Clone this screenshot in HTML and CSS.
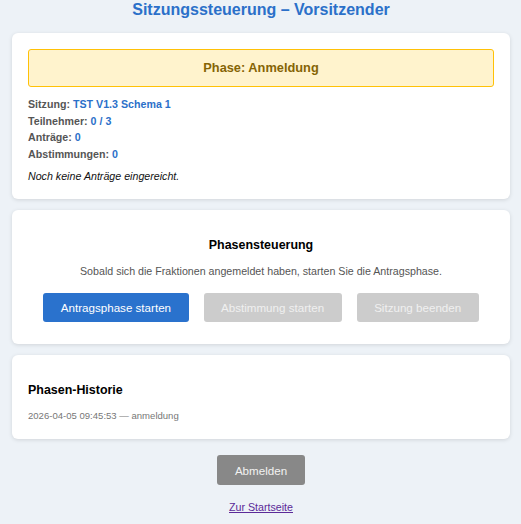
FILE: index.html
```html
<!DOCTYPE html>
<html lang="de">
<head>
<meta charset="utf-8">
<title>Sitzungssteuerung</title>
<link rel="stylesheet" href="styles.css">
</head>
<body>
<main class="page">
  <h1 class="title">Sitzungssteuerung – Vorsitzender</h1>

  <section class="card">
    <div class="phase">Phase: Anmeldung</div>
    <div class="info">
      <div class="info-row">Sitzung: <span class="val">TST V1.3 Schema 1</span></div>
      <div class="info-row">Teilnehmer: <span class="val">0 / 3</span></div>
      <div class="info-row">Anträge: <span class="val">0</span></div>
      <div class="info-row">Abstimmungen: <span class="val">0</span></div>
    </div>
    <p class="note">Noch keine Anträge eingereicht.</p>
  </section>

  <section class="card card-center">
    <h2 class="card-title">Phasensteuerung</h2>
    <p class="hint">Sobald sich die Fraktionen angemeldet haben, starten Sie die Antragsphase.</p>
    <div class="actions">
      <button class="btn btn-primary">Antragsphase starten</button>
      <button class="btn btn-disabled" disabled>Abstimmung starten</button>
      <button class="btn btn-disabled" disabled>Sitzung beenden</button>
    </div>
  </section>

  <section class="card card-history">
    <h2 class="card-title">Phasen-Historie</h2>
    <div class="history-row">2026-04-05 09:45:53 — anmeldung</div>
  </section>

  <div class="footer">
    <button class="btn btn-logout">Abmelden</button>
    <a class="home-link" href="#">Zur Startseite</a>
  </div>
</main>
</body>
</html>
```

FILE: styles.css
```css
html, body {
  margin: 0;
  padding: 0;
  background: #edf2f7;
}
body {
  font-family: "Liberation Sans", Arial, sans-serif;
  color: #222;
}
.page {
  padding: 0 11px 12px 12px;
  display: flex;
  flex-direction: column;
}
.title {
  margin: 0 0 13px;
  font-size: 16px;
  line-height: 20px;
  font-weight: bold;
  color: #2b70c9;
  text-align: center;
}
.card {
  background: #fff;
  border-radius: 6px;
  box-shadow: 0 1px 4px rgba(0, 0, 0, 0.12);
  padding: 16px;
  margin-bottom: 11px;
}
.phase {
  background: #fff3cd;
  border: 1px solid #ffc107;
  border-radius: 3px;
  color: #856404;
  font-weight: bold;
  font-size: 12.8px;
  line-height: 18px;
  text-align: center;
  padding: 9px 10px;
}
.info {
  margin-top: 9px;
}
.info-row {
  font-size: 10.67px;
  line-height: 16.6px;
  font-weight: bold;
  color: #555;
}
.val {
  color: #2b70c9;
}
.note {
  margin: 8px 0 0;
  font-size: 10.67px;
  line-height: 13px;
  font-style: italic;
  color: #111;
}
.card-center {
  text-align: center;
  padding: 26px 16px 22px;
}
.card-title {
  margin: 0;
  font-size: 12.44px;
  line-height: 18px;
  font-weight: bold;
  color: #000;
}
.hint {
  margin: 10px 0 15px;
  font-size: 10.67px;
  line-height: 14px;
  color: #555;
}
.actions {
  display: flex;
  justify-content: center;
  gap: 15px;
}
.btn {
  font-family: "Liberation Sans", Arial, sans-serif;
  font-size: 11.6px;
  line-height: 15px;
  border: none;
  border-radius: 3px;
  padding: 7px 17.5px;
  color: #fff;
  white-space: nowrap;
  flex: none;
}
.btn-primary {
  background: #2a72cd;
}
.btn-disabled {
  background: #cccccc;
  color: #f0f0f0;
}
.card-history {
  padding: 26px 16px 16px;
}
.history-row {
  margin-top: 10px;
  font-size: 9.55px;
  line-height: 14px;
  color: #777;
}
.footer {
  display: flex;
  flex-direction: column;
  align-items: center;
  margin-top: 5px;
}
.btn-logout {
  background: #888;
  color: #f2f2f2;
  padding: 7.5px 18px;
  border-radius: 3px;
}
.home-link {
  margin-top: 16px;
  font-size: 10.67px;
  color: #5b2a98;
}
```
